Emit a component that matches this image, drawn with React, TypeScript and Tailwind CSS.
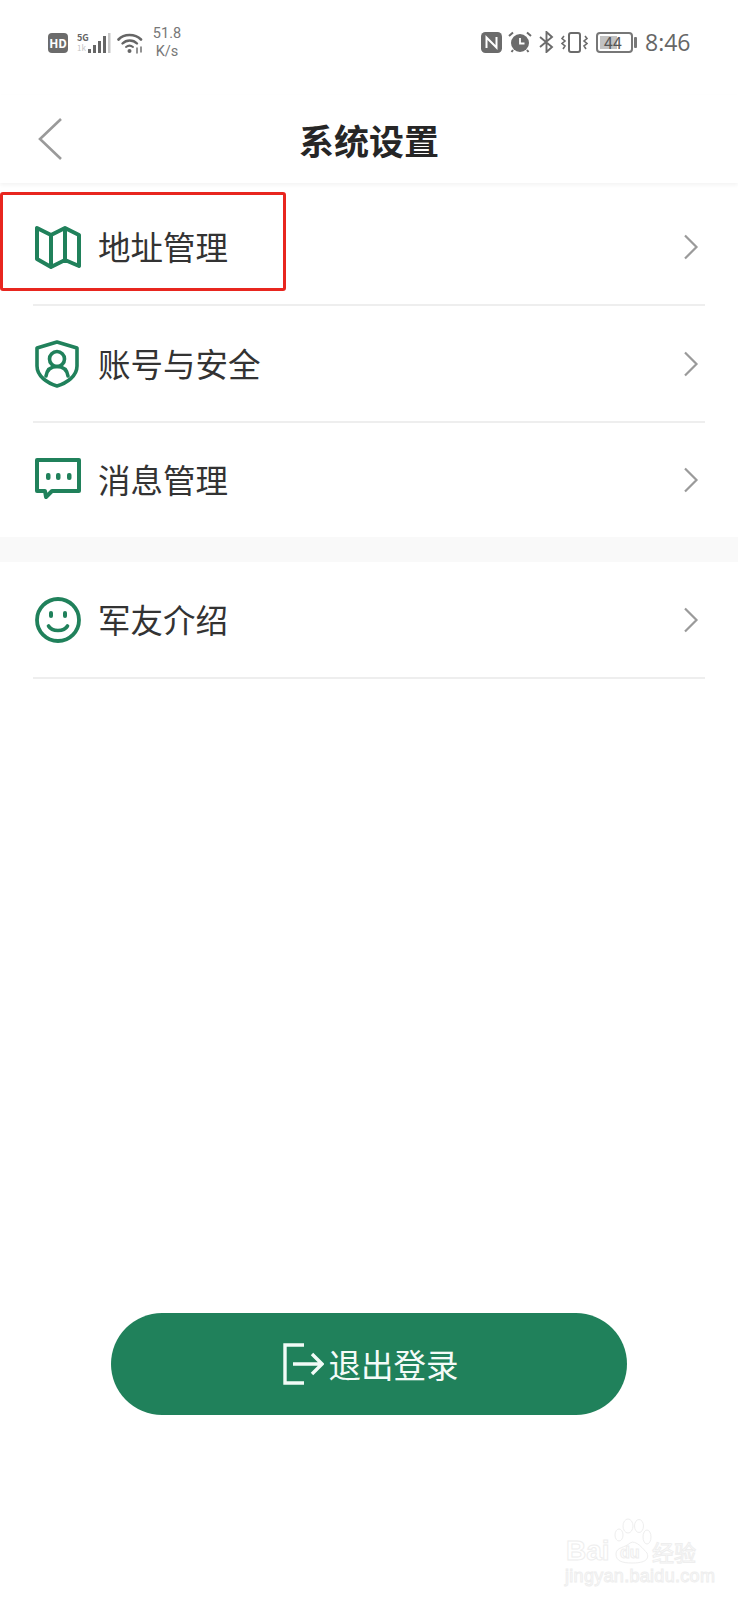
import React from "react";

const GREEN = "#20815b";

function Chevron() {
  return (
    <svg width="16" height="26" viewBox="0 0 16 26" className="shrink-0" fill="none">
      <path d="M2 1.5 L13.5 13 L2 24.5" stroke="#9a9a9a" strokeWidth="2.2" />
    </svg>
  );
}

function MapIcon() {
  return (
    <svg width="46" height="44" viewBox="0 0 46 44" fill="none" stroke={GREEN} strokeWidth="4" strokeLinejoin="round">
      <path d="M2 3 L2 34 L16 42 L30 35 L44 41 L44 10 L30 3 L16 10 Z" />
      <path d="M16 10 L16 42 M30 3 L30 35" />
    </svg>
  );
}

function ShieldIcon() {
  return (
    <svg width="44" height="48" viewBox="0 0 44 48" fill="none" stroke={GREEN} strokeWidth="3.6" strokeLinecap="round" strokeLinejoin="round">
      <path d="M22 2 L42 8 L42 26 C42 36 32 43 22 46 C12 43 2 36 2 26 L2 8 Z" />
      <circle cx="22" cy="19" r="7.5" />
      <path d="M11 36 C12 30 16 26.5 22 26.5 C28 26.5 32 30 33 36" />
    </svg>
  );
}

function ChatIcon() {
  return (
    <svg width="46" height="42" viewBox="0 0 46 42" fill="none" className="-mt-[2px]">
      <path d="M2 2 H44 V33 H17 L11 39 L10 33 H2 Z" stroke={GREEN} strokeWidth="4" strokeLinejoin="round" />
      <rect x="11" y="15" width="4.5" height="7" rx="2" fill={GREEN} />
      <rect x="21" y="15" width="4.5" height="7" rx="2" fill={GREEN} />
      <rect x="32" y="15" width="4.5" height="7" rx="2" fill={GREEN} />
    </svg>
  );
}

function SmileIcon() {
  return (
    <svg width="46" height="46" viewBox="0 0 46 46" fill="none">
      <circle cx="23" cy="23" r="21" stroke={GREEN} strokeWidth="3.8" />
      <rect x="14" y="14" width="4" height="7" rx="2" fill={GREEN} />
      <rect x="28" y="14" width="4" height="7" rx="2" fill={GREEN} />
      <path d="M13.5 29 C17 35 29 35 32.5 29" stroke={GREEN} strokeWidth="3.6" strokeLinecap="round" />
    </svg>
  );
}

function Row({ icon, label, h }: { icon: React.ReactNode; label: string; h: string }) {
  return (
    <div className={`flex items-center pr-[39px] ${h}`}>
      <div className="w-[98px] pl-[35px] flex items-center shrink-0">{icon}</div>
      <span className="flex-1 text-[32.5px] leading-[44px] text-[#333333] -mt-[2px]">{label}</span>
      <Chevron />
    </div>
  );
}

function LeftStatus() {
  return (
    <div className="flex items-center">
      <div className="w-[20px] h-[20px] rounded-[4px] bg-[#6b6b6b] text-white text-[12px] leading-[20px] font-bold text-center">HD</div>
      <div className="ml-[9px] w-[11px] flex flex-col">
        <span className="text-[9px] leading-[10px] font-bold text-[#666666]">5G</span>
        <span className="text-[8px] leading-[10px] text-[#c4c4c4]">1k</span>
      </div>
      <svg width="23" height="21" viewBox="0 0 23 21">
        <rect x="0" y="16" width="3" height="4" fill="#666" />
        <rect x="5" y="12" width="3" height="8" fill="#666" />
        <rect x="10" y="8" width="3" height="12" fill="#666" />
        <rect x="15" y="3" width="3" height="17" fill="#666" />
        <rect x="20" y="0" width="2.5" height="20" fill="#c8c8c8" />
      </svg>
      <svg width="27" height="21" viewBox="0 0 27 21" fill="none" className="ml-[6px]" stroke="#666" strokeLinecap="round">
        <path d="M1.5 6.5 C7 0.5 18 0.5 24 6.5" strokeWidth="2.6" />
        <path d="M5.5 10.5 C9.5 6.5 16 6.5 20 10.5" strokeWidth="2.4" />
        <path d="M9 14 C11 12.4 14 12.4 16 14" strokeWidth="2" />
        <circle cx="12.5" cy="18" r="2" fill="#666" stroke="none" />
        <path d="M20 15 V20 M24 14 V19" strokeWidth="1.4" />
      </svg>
      <div className="ml-[7px] w-[32px] flex flex-col items-center text-[14.5px] leading-[18px] text-[#777777] font-['Roboto',sans-serif]">
        <span>51.8</span>
        <span>K/s</span>
      </div>
    </div>
  );
}

function RightStatus() {
  return (
    <div className="flex items-center mt-[3px]">
      <svg width="21" height="21" viewBox="0 0 21 21">
        <rect width="21" height="21" rx="4.5" fill="#6b6b6b" />
        <path d="M5.5 16 V5.5 L15.5 15.5 V5" stroke="#fff" strokeWidth="2" fill="none" />
      </svg>
      <svg width="24" height="22" viewBox="0 0 24 22" className="ml-[6px]" fill="none">
        <circle cx="12" cy="12" r="9" fill="#6b6b6b" />
        <path d="M12 7 V12.5 H16.5" stroke="#fff" strokeWidth="1.8" />
        <path d="M1 5 L5 1.5 M23 5 L19 1.5 M5 19 L3.5 21 M19 19 L20.5 21" stroke="#6b6b6b" strokeWidth="2" />
      </svg>
      <svg width="15" height="22" viewBox="0 0 15 22" fill="none" className="ml-[7px]">
        <path d="M1 6 L13 16 L7.5 21 V1 L13 6 L1 16" stroke="#6b6b6b" strokeWidth="1.9" />
      </svg>
      <svg width="27" height="21" viewBox="0 0 27 21" fill="none" className="ml-[7px]" stroke="#6b6b6b">
        <rect x="8" y="1" width="11" height="19" rx="2" strokeWidth="2" />
        <path d="M3 4 L1 6.5 L4 9 L1 11.5 L4 14 L2 17 M24 4 L26 6.5 L23 9 L26 11.5 L23 14 L25 17" strokeWidth="1.6" />
      </svg>
      <div className="ml-[8px] flex items-center">
        <div className="relative w-[37px] h-[21px] rounded-[4px] border-2 border-[#777777] p-[2px]">
          <div className="h-full w-[17px] bg-[#c2c2c2]" />
          <span className="absolute left-[6px] top-0 text-[16px] leading-[17px] text-[#555555]">44</span>
        </div>
        <div className="ml-[1px] w-[3px] h-[11px] rounded-[1px] bg-[#777777]" />
      </div>
      <span className="ml-[8px] w-[44px] text-[23px] leading-[28px] text-[#666666] whitespace-nowrap font-['Open_Sans',sans-serif]">8:46</span>
    </div>
  );
}

function Watermark() {
  return (
    <div className="absolute left-[565px] top-[1518px] w-[134px] h-[66px] text-transparent [-webkit-text-stroke:1px_#eeeeee] select-none">
      <span className="absolute left-[1px] top-[18px] text-[28px] leading-[30px] font-bold font-['Liberation_Sans',sans-serif]">Bai</span>
      <svg width="40" height="46" viewBox="0 0 40 46" fill="none" stroke="#eeeeee" strokeWidth="1" className="absolute left-[47px] top-0">
        <ellipse cx="7" cy="17" rx="4" ry="6" />
        <ellipse cx="16" cy="8" rx="5" ry="7" />
        <ellipse cx="27" cy="8" rx="4.5" ry="6.5" />
        <ellipse cx="35" cy="19" rx="4" ry="7" />
        <path d="M4 36 C4 29 13 30 18 25 C24 21 32 32 35 35 C38 43 30 45 20 45 C10 45 4 43 4 36 Z" />
      </svg>
      <span className="absolute left-[55px] top-[26px] text-[16px] leading-[18px] font-bold font-['Liberation_Sans',sans-serif]">du</span>
      <span className="absolute left-[87px] top-[20px] text-[22px] leading-[26px]">经验</span>
      <span className="absolute left-0 top-[50px] text-[18px] leading-[16px] tracking-[0.3px] font-['Liberation_Sans',sans-serif] whitespace-nowrap">jingyan.baidu.com</span>
    </div>
  );
}

export default function App() {
  return (
    <div className="relative w-[738px] h-[1600px] overflow-hidden bg-white font-['Noto_Sans_CJK_SC','Noto_Sans',sans-serif]">
      <div className="flex items-start justify-between pl-[48px] pr-[49px] pt-[25px] h-[95px]">
        <LeftStatus />
        <RightStatus />
      </div>
      <div className="relative flex items-center justify-center h-[88px] shadow-[0_2px_4px_rgba(0,0,0,0.05)]">
        <svg width="26" height="44" viewBox="0 0 26 44" fill="none" className="absolute left-[37px] top-[22px]">
          <path d="M24 2 L3 22 L24 42" stroke="#9a9a9a" strokeWidth="2.6" />
        </svg>
        <h1 className="text-[35px] leading-[46px] font-bold text-[#262626] mt-[2px]">系统设置</h1>
      </div>

      <div className="pt-[7px]">
        <Row h="h-[114px]" icon={<MapIcon />} label="地址管理" />
        <div className="mx-[33px] h-[2px] bg-[#eeeeee]" />
        <Row h="h-[115px]" icon={<ShieldIcon />} label="账号与安全" />
        <div className="mx-[33px] h-[2px] bg-[#eeeeee]" />
        <Row h="h-[114px]" icon={<ChatIcon />} label="消息管理" />
        <div className="h-[25px] bg-[#f9f9f9]" />
        <Row h="h-[115px]" icon={<SmileIcon />} label="军友介绍" />
        <div className="mx-[33px] h-[2px] bg-[#eeeeee]" />
      </div>

      <div className="mt-[634px] ml-[111px] w-[516px] h-[102px] rounded-[51px] bg-[#20815b] flex items-center justify-center pl-[3px]">
        <svg width="42" height="42" viewBox="0 0 42 42" fill="none" stroke="#f2fbf7" strokeWidth="3.4" className="mr-[4px]">
          <path d="M22 2 H3 V40 H22" />
          <path d="M11 21 H40 M30 11 L40 21 L30 31" />
        </svg>
        <span className="text-[32.5px] leading-[44px] text-[#f4fbf8] -mt-[1px]">退出登录</span>
      </div>

      <div className="absolute left-0 top-[192px] w-[286px] h-[99px] border-[3px] border-[#e8261f] rounded-[3px]" />
      <Watermark />
    </div>
  );
}
